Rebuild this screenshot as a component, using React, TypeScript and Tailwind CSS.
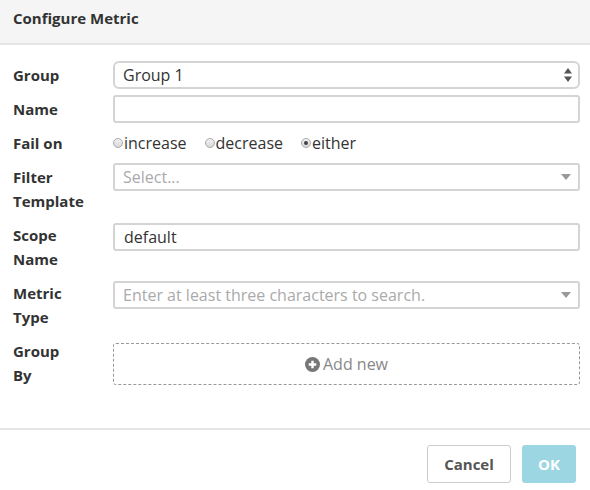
import type { ReactNode } from "react";

const font = { fontFamily: "'Open Sans', Lato, sans-serif" };

function Label({ children, className = "" }: { children: ReactNode; className?: string }) {
  return (
    <div className={`w-[100px] shrink-0 text-[15px] font-bold leading-6 text-[#333] ${className}`}>
      {children}
    </div>
  );
}

function Radio({ checked, label }: { checked?: boolean; label: string }) {
  return (
    <label className="flex items-center text-[16px] text-[#333]">
      <span className="mr-[1px] flex h-[10px] w-[10px] items-center justify-center rounded-full border border-[#aaa] bg-gradient-to-b from-[#f2f2f2] to-[#d8d8d8]">
        {checked && <span className="h-[4px] w-[4px] rounded-full bg-[#444]" />}
      </span>
      {label}
    </label>
  );
}

function Caret() {
  return (
    <svg width="10" height="6" viewBox="0 0 10 6" className="text-[#999]">
      <path d="M0 0h10L5 6z" fill="currentColor" />
    </svg>
  );
}

export default function App() {
  return (
    <div className="h-[490px] w-[590px] bg-white" style={font}>
      <header className="h-[45px] border-b-2 border-[#e5e5e5] bg-[#f5f5f5] px-[13px] pt-[6px]">
        <h1 className="text-[15px] font-bold leading-6 text-[#333]">Configure Metric</h1>
      </header>

      <div className="flex flex-col pl-[13px] pr-[10px] pt-[16px]">
        <div className="flex items-center">
          <Label>Group</Label>
          <div className="flex h-[28px] flex-1 items-center justify-between rounded-[6px] border-2 border-[#d4d4d4] pl-[8px] pr-[6px] text-[16px] text-[#333]">
            <span>Group 1</span>
            <svg width="8" height="14" viewBox="0 0 8 14" className="text-[#555]">
              <path d="M0 5.5L4 0l4 5.5zM0 8.5h8L4 14z" fill="currentColor" />
            </svg>
          </div>
        </div>

        <div className="mt-[6px] flex items-center">
          <Label>Name</Label>
          <div className="h-[28px] flex-1 rounded-[3px] border-2 border-[#d4d4d4]" />
        </div>

        <div className="mt-[8px] flex h-[24px] items-center">
          <Label>Fail on</Label>
          <div className="flex items-center gap-[18px]">
            <Radio label="increase" />
            <Radio label="decrease" />
            <Radio label="either" checked />
          </div>
        </div>

        <div className="mt-[8px] flex items-start">
          <Label className="pt-[2px]">
            Filter
            <br />
            Template
          </Label>
          <div className="flex h-[28px] flex-1 items-center justify-between rounded-[3px] border-2 border-[#d4d4d4] pl-[8px] pr-[7px] text-[16px] text-[#aaa]">
            <span>Select...</span>
            <Caret />
          </div>
        </div>

        <div className="mt-[10px] flex items-start">
          <Label>
            Scope
            <br />
            Name
          </Label>
          <div className="flex h-[28px] flex-1 items-center rounded-[3px] border-2 border-[#d4d4d4] pl-[9px] text-[16px] text-[#333]">
            default
          </div>
        </div>

        <div className="mt-[10px] flex items-start">
          <Label>
            Metric
            <br />
            Type
          </Label>
          <div className="flex h-[28px] flex-1 items-center justify-between rounded-[3px] border-2 border-[#d4d4d4] pl-[8px] pr-[7px] text-[16px] text-[#aaa]">
            <span>Enter at least three characters to search.</span>
            <Caret />
          </div>
        </div>

        <div className="mt-[10px] flex items-start">
          <Label>
            Group
            <br />
            By
          </Label>
          <div className="mt-[4px] flex h-[42px] flex-1 items-center justify-center rounded-[3px] border border-dashed border-[#999] text-[16px] text-[#888]">
            <svg width="15" height="15" viewBox="0 0 16 16" className="mr-[3px] text-[#777]">
              <circle cx="8" cy="8" r="8" fill="currentColor" />
              <path d="M8 4v8M4 8h8" stroke="white" strokeWidth="2.6" />
            </svg>
            Add new
          </div>
        </div>
      </div>

      <footer className="mt-[41px] flex justify-end gap-[11px] border-t-2 border-[#e5e5e5] pr-[14px] pt-[15px]">
        <button className="h-[38px] w-[84px] rounded-[3px] border border-[#ccc] bg-white text-[15px] font-bold text-[#555]">
          Cancel
        </button>
        <button className="h-[38px] w-[54px] rounded-[3px] bg-[#9dd6e3] text-[15px] font-bold text-white">
          OK
        </button>
      </footer>
    </div>
  );
}
